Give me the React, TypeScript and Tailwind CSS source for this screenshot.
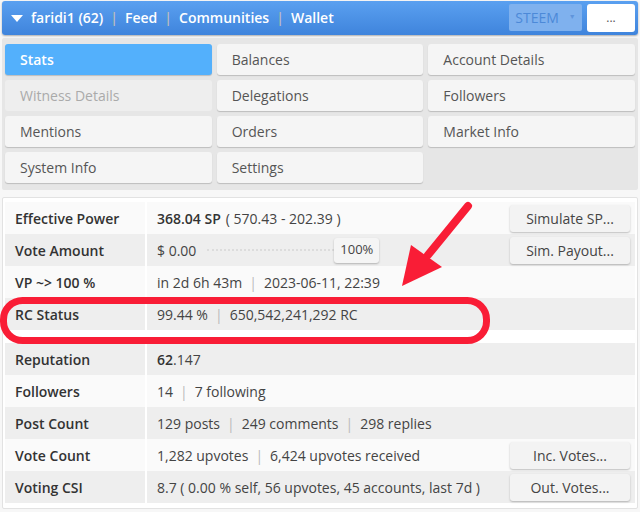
const tabs = [
  { label: "Stats", active: true },
  { label: "Balances" },
  { label: "Account Details" },
  { label: "Witness Details", disabled: true },
  { label: "Delegations" },
  { label: "Followers" },
  { label: "Mentions" },
  { label: "Orders" },
  { label: "Market Info" },
  { label: "System Info" },
  { label: "Settings" },
];

function Sep() {
  return <span className="mx-[7px] text-[#bbbbbb]">|</span>;
}

function SideButton({ children }: { children: React.ReactNode }) {
  return (
    <button className="ml-auto mr-[5px] h-[27px] w-[120px] shrink-0 rounded-[3px] bg-[#f3f3f3] text-[14px] text-[#444] shadow-[0_1px_2px_rgba(0,0,0,0.25)]">
      {children}
    </button>
  );
}

function Row({
  label,
  gray,
  children,
  action,
}: {
  label: string;
  gray?: boolean;
  children: React.ReactNode;
  action?: string;
}) {
  return (
    <div className={`flex h-8 items-center ${gray ? "bg-[#eeeeee]" : "bg-[#fafafa]"}`}>
      <div className="flex h-full w-[142px] shrink-0 items-center border-r-2 border-white pl-[10px] font-semibold text-[#333]">
        {label}
      </div>
      <div className="flex h-full flex-1 items-center pl-[10px] text-[#444]">
        {children}
        {action && <SideButton>{action}</SideButton>}
      </div>
    </div>
  );
}

export default function App() {
  return (
    <div
      className="relative h-[512px] w-[640px] overflow-hidden bg-[#f7f7f7] px-[2px] pt-[1px] text-[14px]"
      style={{ fontFamily: '"Open Sans", "Liberation Sans", sans-serif' }}
    >
      {/* top nav */}
      <div className="flex h-[34px] items-center rounded-[3px] bg-gradient-to-b from-[#5aa0f0] to-[#3f84dc] pb-[1px] pl-[8px] pr-[3px] text-[14px] font-semibold text-white shadow-[0_1px_2px_rgba(0,0,0,0.3)]">
        <svg width="14" height="10" viewBox="0 0 14 10" className="mr-[7px]">
          <polygon points="1,2 13,2 7,9" fill="white" />
        </svg>
        <span>faridi1 (62)</span>
        <Sep />
        <span>Feed</span>
        <Sep />
        <span>Communities</span>
        <Sep />
        <span>Wallet</span>
        <div className="ml-auto flex h-[27px] w-[73px] items-center justify-center gap-[10px] rounded-[2px] bg-[#7fb1ee] text-[14px] font-normal text-[#4c89d8]">
          STEEM
          <span className="text-[7px] text-[#5f95dc]">▼</span>
        </div>
        <div className="ml-[5px] flex h-[28px] w-[48px] items-center justify-center rounded-[3px] bg-white text-[12px] font-normal text-[#555]">
          ...
        </div>
      </div>

      {/* tabs */}
      <div className="mt-[3px] grid grid-cols-3 gap-[5px] rounded-[2px] bg-[#e6e6e6] px-[3px] pb-[7px] pt-[6px]">
        {tabs.map((t) => (
          <div
            key={t.label}
            className={`flex h-[31px] items-center rounded-[3px] pl-[15px] text-[14px] shadow-[0_1px_1px_rgba(0,0,0,0.18)] ${
              t.active
                ? "bg-[#53b0fc] font-semibold text-white"
                : t.disabled
                ? "bg-[#eeeeee] text-[#aaaaaa] shadow-none"
                : "bg-[#f5f5f5] text-[#555]"
            }`}
          >
            {t.label}
          </div>
        ))}
      </div>

      {/* stats table */}
      <div className="mt-[7px] rounded-[2px] border border-[#e2e2e2] bg-white px-[2px] pb-[5px] pt-[4px]">
        <Row label="Effective Power" action="Simulate SP...">
          <span className="font-semibold text-[#333]">368.04 SP</span>
          <span className="ml-[5px]">( 570.43 - 202.39 )</span>
        </Row>
        <Row label="Vote Amount" gray action="Sim. Payout...">
          <span>$ 0.00</span>
          <div className="ml-[11px] h-0 w-[127px] border-t-2 border-dotted border-[#dcdcdc]" />
          <div className="flex h-[25px] w-[45px] items-center justify-center rounded-[3px] bg-[#f5f5f5] text-[13px] text-[#444] shadow-[0_1px_2px_rgba(0,0,0,0.25)]">
            100%
          </div>
        </Row>
        <Row label="VP ~> 100 %">
          <span>in 2d 6h 43m</span>
          <Sep />
          <span>2023-06-11, 22:39</span>
        </Row>
        <Row label="RC Status" gray>
          <span>99.44 %</span>
          <Sep />
          <span>650,542,241,292 RC</span>
        </Row>
        <div className="h-[13px] bg-white" />
        <Row label="Reputation" gray>
          <span className="font-semibold text-[#333]">62</span>
          <span>.147</span>
        </Row>
        <Row label="Followers">
          <span>14</span>
          <Sep />
          <span>7 following</span>
        </Row>
        <Row label="Post Count" gray>
          <span>129 posts</span>
          <Sep />
          <span>249 comments</span>
          <Sep />
          <span>298 replies</span>
        </Row>
        <Row label="Vote Count" action="Inc. Votes...">
          <span>1,282 upvotes</span>
          <Sep />
          <span>6,424 upvotes received</span>
        </Row>
        <Row label="Voting CSI" gray action="Out. Votes...">
          <span>8.7 ( 0.00 % self, 56 upvotes, 45 accounts, last 7d )</span>
        </Row>
      </div>

      {/* annotation overlay */}
      <svg
        className="pointer-events-none absolute left-0 top-0"
        width="640"
        height="512"
        viewBox="0 0 640 512"
      >
        <rect x="3.5" y="300.5" width="483" height="40" rx="19" fill="none" stroke="#f91d36" strokeWidth="7" />
        <line x1="468" y1="206" x2="428" y2="255" stroke="#f91d36" strokeWidth="8" strokeLinecap="round" />
        <polygon points="402,286 411,245 442,267" fill="#f91d36" />
      </svg>
    </div>
  );
}
